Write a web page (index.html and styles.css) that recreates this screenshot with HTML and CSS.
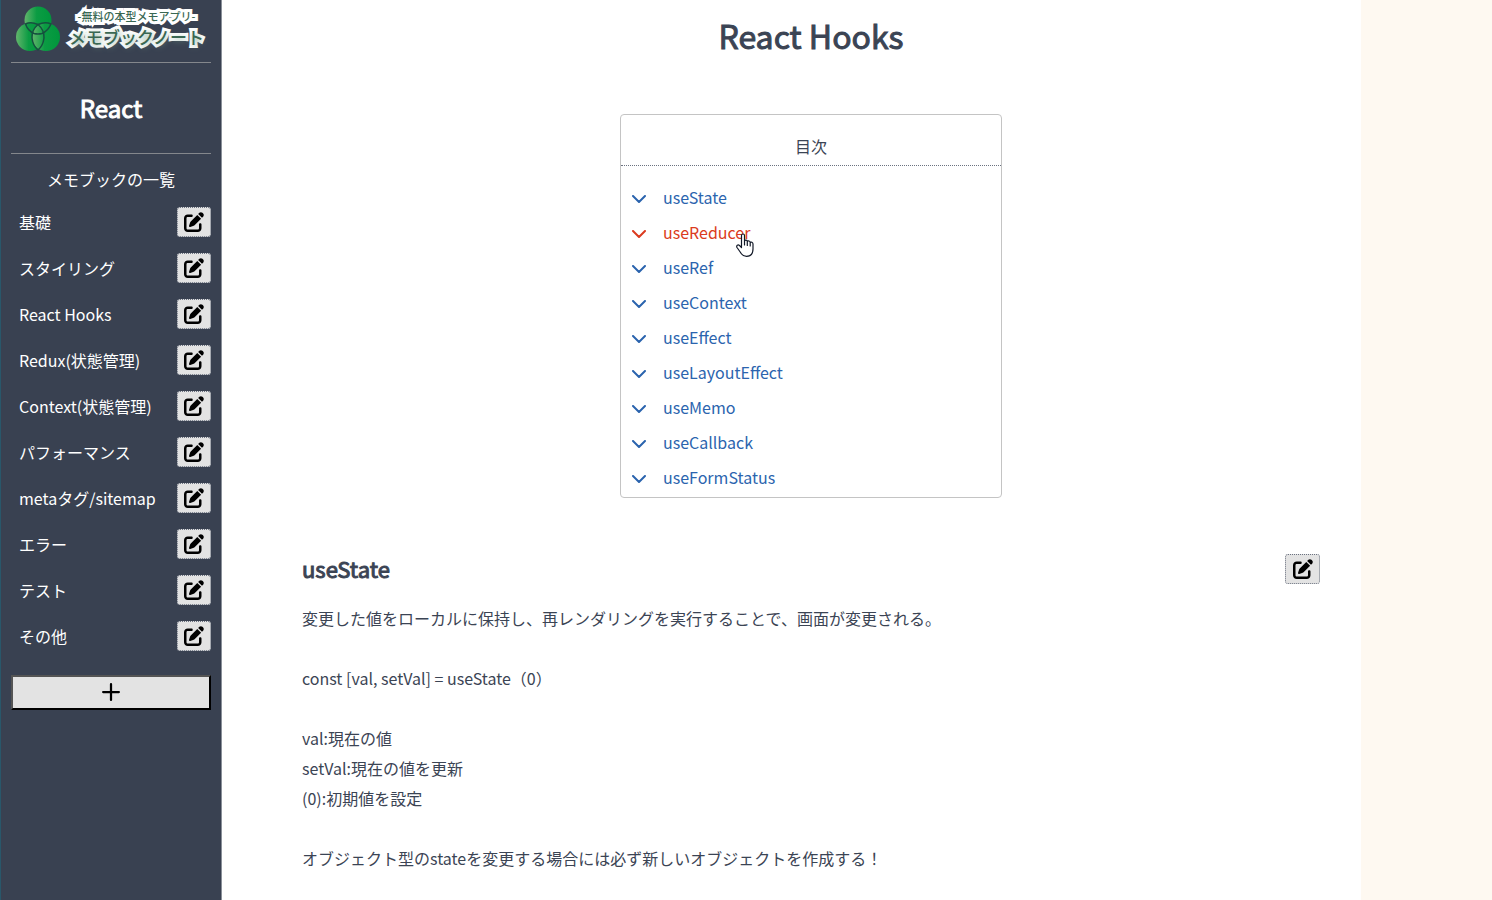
FILE: index.html
```html
<!DOCTYPE html>
<html lang="ja">
<head>
<meta charset="utf-8">
<title>React Hooks</title>
<meta name="viewport" content="width=device-width, initial-scale=1">
<link rel="stylesheet" href="styles.css">
</head>
<body>
<svg class="defs" aria-hidden="true">
  <symbol id="edit" viewBox="0 0 512 512"><path d="M471.6 21.7c-21.9-21.9-57.3-21.9-79.2 0L362.3 51.7l97.9 97.9 30.1-30.1c21.9-21.9 21.9-57.3 0-79.2L471.6 21.7zm-299.2 220c-6.1 6.1-10.8 13.6-13.5 21.9l-29.6 88.8c-2.9 8.6-.6 18.1 5.8 24.6s15.9 8.7 24.6 5.8l88.8-29.6c8.2-2.7 15.7-7.4 21.9-13.5L437.7 172.3 339.7 74.3 172.4 241.7zM96 64C43 64 0 107 0 160V416c0 53 43 96 96 96H352c53 0 96-43 96-96V320c0-17.7-14.3-32-32-32s-32 14.3-32 32v96c0 17.7-14.3 32-32 32H96c-17.7 0-32-14.3-32-32V160c0-17.7 14.3-32 32-32h96c17.7 0 32-14.3 32-32s-14.3-32-32-32H96z"/></symbol>
  <symbol id="chevron" viewBox="0 0 14 8"><path d="M1 1l6 6 6-6" fill="none" stroke="currentColor" stroke-width="2" stroke-linecap="round" stroke-linejoin="round"/></symbol>
</svg>
<div class="layout">
  <nav class="sidebar" aria-label="メモブック">
    <a class="logo" href="#">
      <svg class="logo-mark" viewBox="0 0 44 46" aria-hidden="true">
        <defs><linearGradient id="leaf" x1="0" x2="1"><stop offset="0" stop-color="#63b56c"/><stop offset=".45" stop-color="#0b9c43"/><stop offset="1" stop-color="#00963c"/></linearGradient></defs>
        <g fill="url(#leaf)"><circle cx="22" cy="14" r="13.500"/><circle cx="14" cy="31" r="14"/><circle cx="30" cy="31" r="14"/></g>
        <g fill="none" stroke="#16503f" stroke-width="1.500" stroke-linejoin="round"><path d="M9.500 18Q15 15.500 22 18.500Q29 15.500 35 18Q32 25 26 27.500Q22 28.500 18 27.500Q12 25 9.500 18z"/><path d="M22 18.500Q15.500 24 16 32Q17 40 22 44Q27 40 28 32Q28.500 24 22 18.500z"/></g>
      </svg>
      <span class="logo-text"><span class="logo-sub">-無料の本型メモアプリ-</span><span class="logo-name">メモブックノート</span></span>
    </a>
    <h2 class="book-title">React</h2>
    <p class="list-title">メモブックの一覧</p>
    <ul class="pages">
      <li class="page"><a href="#">基礎</a><button class="edit" aria-label="基礎を編集"><svg><use href="#edit"/></svg></button></li>
      <li class="page"><a href="#">スタイリング</a><button class="edit" aria-label="スタイリングを編集"><svg><use href="#edit"/></svg></button></li>
      <li class="page"><a href="#">React Hooks</a><button class="edit" aria-label="React Hooksを編集"><svg><use href="#edit"/></svg></button></li>
      <li class="page"><a href="#">Redux(状態管理)</a><button class="edit" aria-label="Reduxを編集"><svg><use href="#edit"/></svg></button></li>
      <li class="page"><a href="#">Context(状態管理)</a><button class="edit" aria-label="Contextを編集"><svg><use href="#edit"/></svg></button></li>
      <li class="page"><a href="#">パフォーマンス</a><button class="edit" aria-label="パフォーマンスを編集"><svg><use href="#edit"/></svg></button></li>
      <li class="page"><a href="#">metaタグ/sitemap</a><button class="edit" aria-label="metaタグ/sitemapを編集"><svg><use href="#edit"/></svg></button></li>
      <li class="page"><a href="#">エラー</a><button class="edit" aria-label="エラーを編集"><svg><use href="#edit"/></svg></button></li>
      <li class="page"><a href="#">テスト</a><button class="edit" aria-label="テストを編集"><svg><use href="#edit"/></svg></button></li>
      <li class="page"><a href="#">その他</a><button class="edit" aria-label="その他を編集"><svg><use href="#edit"/></svg></button></li>
    </ul>
    <button class="add" aria-label="ページを追加"><svg viewBox="0 0 16 16"><path d="M8 1v14M1 8h14" fill="none" stroke="currentColor" stroke-width="2" stroke-linecap="round"/></svg></button>
  </nav>
  <main class="content">
    <h1 class="title">React Hooks</h1>
    <section class="toc">
      <h2 class="toc-title">目次</h2>
      <ul class="toc-list">
        <li><a href="#usestate"><svg><use href="#chevron"/></svg>useState</a></li>
        <li><a class="hovered" href="#"><svg><use href="#chevron"/></svg>useReducer</a>
          <svg class="pointer" viewBox="0 0 18 24" aria-hidden="true"><path d="M5.500 13.500V2.500C5.500 .5 8.500 .5 8.500 2.500V8C9 6.700 11.300 7 11.300 8.500C12 7.500 14.200 7.900 14.200 9.500C15 8.700 17 9.200 17 11V16C17 20.500 14.500 23.300 10.500 23.300C7 23.300 5.500 21.500 4.200 19L1 14.500C0 12.500 2 11.300 3.500 12.500L5.500 14.500M8.500 8V12M11.300 8.500V12.500M14.200 9.500V13" fill="#fff" stroke="#111827" stroke-width="1.200" stroke-linejoin="round" stroke-linecap="round"/></svg></li>
        <li><a href="#"><svg><use href="#chevron"/></svg>useRef</a></li>
        <li><a href="#"><svg><use href="#chevron"/></svg>useContext</a></li>
        <li><a href="#"><svg><use href="#chevron"/></svg>useEffect</a></li>
        <li><a href="#"><svg><use href="#chevron"/></svg>useLayoutEffect</a></li>
        <li><a href="#"><svg><use href="#chevron"/></svg>useMemo</a></li>
        <li><a href="#"><svg><use href="#chevron"/></svg>useCallback</a></li>
        <li><a href="#"><svg><use href="#chevron"/></svg>useFormStatus</a></li>
      </ul>
    </section>
    <article class="memo" id="usestate">
      <header class="memo-head"><h2>useState</h2><button class="edit" aria-label="useStateを編集"><svg><use href="#edit"/></svg></button></header>
      <p>変更した値をローカルに保持し、再レンダリングを実行することで、画面が変更される。</p>
      <p>const [val, setVal] = useState（0）</p>
      <p>val:現在の値<br>setVal:現在の値を更新<br>(0):初期値を設定</p>
      <p>オブジェクト型のstateを変更する場合には必ず新しいオブジェクトを作成する！</p>
    </article>
  </main>
  <aside class="side"></aside>
</div>
</body>
</html>
```

FILE: styles.css
```css
* { box-sizing: border-box; }
body {
  margin: 0;
  font-family: "Noto Sans CJK JP", sans-serif;
  font-size: 16px;
  line-height: 30px;
  font-weight: 400;
  color: #3b4454;
  background: #fff;
}
h1, h2, p, ul { margin: 0; padding: 0; font-weight: 400; }
ul { list-style: none; }
a { color: inherit; text-decoration: none; }
.defs { display: none; }

.layout { display: flex; min-height: 100vh; }

.sidebar {
  flex: none;
  width: 222px;
  padding: 0 10px;
  background: #394151;
  color: #fff;
  border-left: 1px solid #29576a;
  border-right: 1px solid #8a9099;
}
.logo {
  display: flex;
  align-items: flex-start;
  gap: 9px;
  height: 63px;
  padding: 6px 0 0 5px;
  border-bottom: 1px solid #84878c;
}
.logo-mark { flex: none; width: 44px; height: 46px; }
.logo-text {
  display: flex;
  flex-direction: column;
  align-items: center;
  color: #3a6853;
  font-weight: 500;
  white-space: nowrap;
  -webkit-text-stroke: 6px #fff;
  paint-order: stroke fill;
  stroke-linejoin: round;
}
.logo-sub { font-size: 11px; line-height: 20px; }
.logo-name {
  font-size: 17px;
  line-height: 22px;
  text-shadow: 1px 2px 6px #6f9c86;
}
.book-title {
  padding: 30px 0;
  border-bottom: 1px solid #84878c;
  text-align: center;
  font-size: 24px;
  -webkit-text-stroke: 1px;
}
.list-title { padding: 10px 0 5px; text-align: center; }
.page {
  display: flex;
  align-items: center;
  justify-content: space-between;
  height: 46px;
  padding-left: 8px;
}
.edit {
  display: grid;
  place-items: center;
  width: 34px;
  height: 30px;
  padding: 0;
  border: 1px dotted #6b7280;
  border-radius: 3px;
  background: #e3e3e3;
  color: #000;
}
.edit svg { width: 20px; height: 20px; fill: currentColor; }
.page .edit { padding-bottom: 1px; }
.add {
  display: grid;
  place-items: center;
  width: 100%;
  height: 35px;
  margin-top: 16px;
  padding: 0 0 2px;
  border: 2px outset #000;
  background: #e3e3e3;
  color: #000;
}
.add svg { width: 18px; height: 18px; }

.content { flex: 1; min-width: 0; padding: 12px 41px 40px 80px; }
.title {
  text-align: center;
  font-size: 32px;
  line-height: 46px;
  -webkit-text-stroke: 1px;
}
.toc {
  width: 382px;
  max-width: 100%;
  margin: 56px auto 0;
  border: 1px solid #c4c4c4;
  border-radius: 4px;
}
.toc-title {
  padding: 16px 0 4px;
  border-bottom: 1px dotted #6b7280;
  text-align: center;
  font-size: 16px;
}
.toc-list { padding: 15px 11px 1px; color: #2b64ae; }
.toc-list li { position: relative; }
.toc-list a {
  display: flex;
  align-items: center;
  gap: 17px;
  height: 35px;
  padding-bottom: 3px;
}
.toc-list a svg { width: 14px; height: 8px; margin-top: 3px; }
.toc-list a.hovered { color: #db3b20; }
.pointer { position: absolute; left: 104px; top: 17px; width: 18px; height: 24px; }

.memo { margin-top: 56px; }
.memo-head {
  display: flex;
  align-items: center;
  justify-content: space-between;
  margin-bottom: 19px;
}
.memo-head h2 { padding-bottom: 2px; font-size: 22px; line-height: 28px; -webkit-text-stroke: 1px; }
.memo-head .edit { width: 35px; }
.memo p + p { margin-top: 30px; }

.side { flex: none; width: 131px; background: #fef9f1; }
```
